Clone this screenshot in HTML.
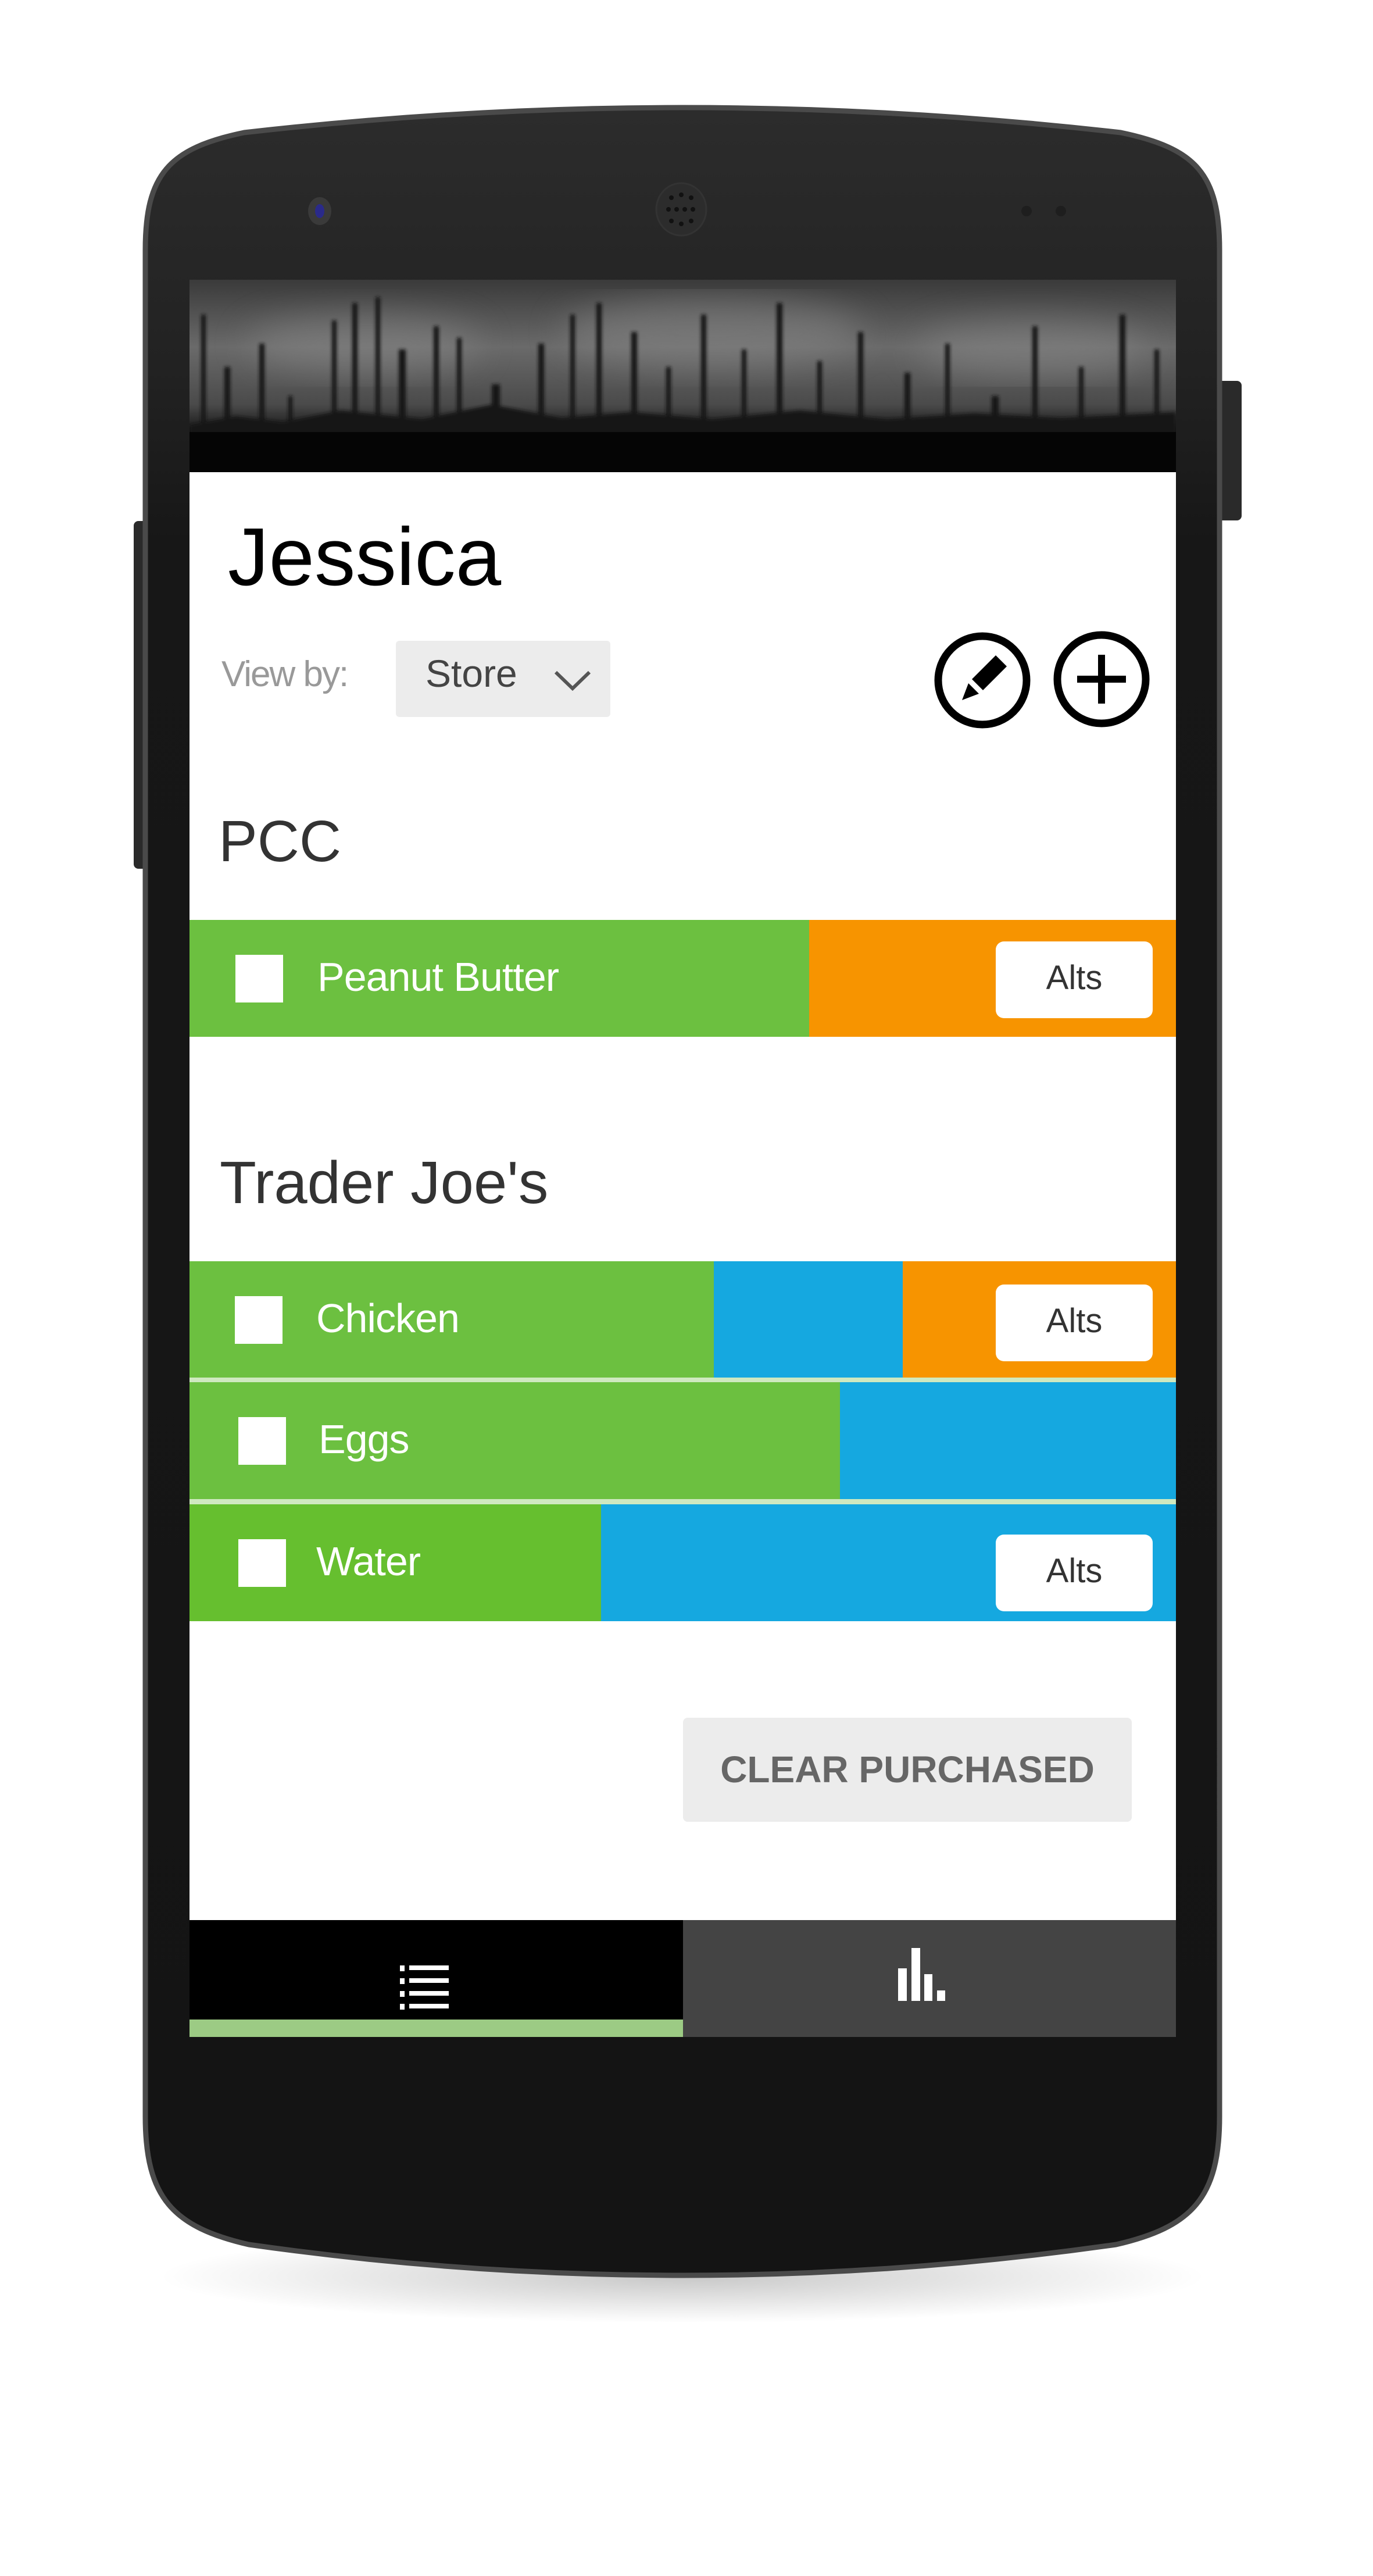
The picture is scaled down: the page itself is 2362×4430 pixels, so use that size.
<!DOCTYPE html>
<html><head><meta charset="utf-8"><style>
html,body{margin:0;padding:0;background:#fff;}
body{width:2362px;height:4430px;position:relative;overflow:hidden;font-family:"Liberation Sans",Arial,sans-serif;}
.a{position:absolute;}
.row{position:absolute;left:326px;width:1697px;height:201px;overflow:hidden;}
.row div{position:absolute;top:0;height:100%;}
.cb{position:absolute;width:82px;height:82px;background:#fff;}
.lbl{position:absolute;color:#fff;font-size:70px;letter-spacing:-1px;}
.alts{position:absolute;left:1387px;width:270px;height:132px;background:#fff;border-radius:14px;color:#333;font-size:58px;text-align:center;line-height:126px;}
</style></head><body>
<svg class="a" style="left:0;top:0" width="2362" height="4430">
<defs>
<linearGradient id="bg" x1="0" y1="0" x2="0" y2="1">
<stop offset="0" stop-color="#2c2c2c"/><stop offset="0.12" stop-color="#222"/><stop offset="0.2" stop-color="#171717"/><stop offset="1" stop-color="#141414"/>
</linearGradient>
<radialGradient id="sh" cx="0.5" cy="0.5" r="0.5"><stop offset="0" stop-color="#000" stop-opacity="0.22"/><stop offset="1" stop-color="#000" stop-opacity="0"/></radialGradient>
</defs>
<ellipse cx="1174" cy="3915" rx="900" ry="80" fill="url(#sh)"/>
<rect x="2090" y="655" width="46" height="240" rx="8" fill="#2a2a2a"/>
<rect x="230" y="896" width="40" height="598" rx="8" fill="#2a2a2a"/>
<path d="M250,430 C250,300 290,255 420,228 Q1174,142 1928,228 C2058,255 2098,300 2098,430 L2098,3640 C2098,3780 2050,3830 1920,3860 Q1174,3966 428,3860 C298,3830 250,3780 250,3640 Z" fill="url(#bg)" stroke="#4a4a4a" stroke-width="9"/>
<ellipse cx="550" cy="363" rx="20" ry="24" fill="#3a3a3a"/><ellipse cx="550" cy="363" rx="8" ry="12" fill="#2a2a8a"/>
<ellipse cx="1172" cy="360" rx="43" ry="45" fill="#2c2c2c" stroke="#333" stroke-width="3"/>
<g fill="#111">
<circle cx="1155" cy="340" r="4"/><circle cx="1172" cy="335" r="4"/><circle cx="1189" cy="340" r="4"/>
<circle cx="1150" cy="360" r="4"/><circle cx="1164" cy="360" r="4"/><circle cx="1178" cy="360" r="4"/><circle cx="1192" cy="360" r="4"/>
<circle cx="1155" cy="380" r="4"/><circle cx="1172" cy="385" r="4"/><circle cx="1189" cy="380" r="4"/></g>
<circle cx="1766" cy="363" r="9" fill="#1e1e1e"/><circle cx="1825" cy="363" r="9" fill="#1e1e1e"/>
</svg>
<div class="a" style="left:326px;top:481px;width:1697px;height:3022px;background:#fff;"></div>
<svg class="a" style="left:326px;top:481px" width="1697" height="331">
<defs><linearGradient id="sky" x1="0" y1="0" x2="0" y2="1"><stop offset="0" stop-color="#3a3a3a"/><stop offset="0.35" stop-color="#6a6a6a"/><stop offset="0.65" stop-color="#4a4a4a"/><stop offset="0.8" stop-color="#111"/><stop offset="1" stop-color="#000"/></linearGradient>
<filter id="bl"><feGaussianBlur stdDeviation="3"/></filter><filter id="bl2"><feGaussianBlur stdDeviation="30"/></filter></defs>
<rect width="1697" height="331" fill="url(#sky)"/>
<g fill="#8a8a8a" opacity="0.5" filter="url(#bl2)"><ellipse cx="300" cy="110" rx="200" ry="50"/><ellipse cx="900" cy="90" rx="260" ry="60"/><ellipse cx="1450" cy="120" rx="200" ry="50"/></g>
<g fill="#151515" filter="url(#bl)">
<rect x="20" y="60" width="8" height="220"/><rect x="60" y="150" width="10" height="140"/><rect x="120" y="110" width="9" height="180"/><rect x="170" y="200" width="7" height="90"/><rect x="245" y="70" width="8" height="220"/><rect x="280" y="40" width="9" height="250"/><rect x="320" y="30" width="8" height="260"/><rect x="360" y="120" width="12" height="170"/><rect x="420" y="80" width="9" height="210"/><rect x="460" y="100" width="8" height="190"/><rect x="520" y="180" width="14" height="110"/><rect x="600" y="110" width="10" height="180"/><rect x="655" y="60" width="8" height="230"/><rect x="700" y="40" width="9" height="250"/><rect x="760" y="90" width="10" height="200"/><rect x="820" y="150" width="8" height="140"/><rect x="880" y="60" width="9" height="230"/><rect x="950" y="120" width="8" height="170"/><rect x="1010" y="40" width="10" height="250"/><rect x="1080" y="140" width="8" height="150"/><rect x="1150" y="90" width="9" height="200"/><rect x="1230" y="160" width="10" height="130"/><rect x="1300" y="110" width="8" height="180"/><rect x="1380" y="200" width="12" height="90"/><rect x="1450" y="80" width="9" height="210"/><rect x="1530" y="150" width="8" height="140"/><rect x="1600" y="60" width="10" height="230"/><rect x="1660" y="120" width="8" height="170"/>
<path d="M0,250 L80,235 L160,245 L260,225 L400,240 L520,215 L640,238 L760,228 L900,240 L1050,225 L1200,240 L1350,230 L1500,238 L1697,228 L1697,331 L0,331 Z"/>
</g>
<rect y="262" width="1697" height="69" fill="#050505"/>
</svg>
<div class="a" style="left:392px;top:872px;font-size:141px;line-height:170px;color:#000;">Jessica</div>
<div class="a" style="left:381px;top:1125px;font-size:62px;line-height:70px;color:#999;letter-spacing:-2px;">View by:</div>
<div class="a" style="left:681px;top:1102px;width:369px;height:131px;background:#ececec;border-radius:6px;"></div>
<div class="a" style="left:732px;top:1120px;font-size:66px;line-height:76px;color:#444;">Store</div>
<svg class="a" style="left:950px;top:1150px" width="70" height="40"><path d="M6,6 L35,34 L64,6" fill="none" stroke="#555" stroke-width="6"/></svg>
<svg class="a" style="left:1600px;top:1080px" width="400" height="180">
<circle cx="90" cy="90" r="76" fill="none" stroke="#000" stroke-width="13"/>
<path d="M72,88 L113,47 L132,66 L91,107 Z" fill="#000"/><path d="M66,95 L84,113 L55,124 Z" fill="#000"/>
<circle cx="295" cy="88" r="76" fill="none" stroke="#000" stroke-width="13"/>
<path d="M295,46 V130 M253,88 H337" stroke="#000" stroke-width="12"/>
</svg>
<div class="a" style="left:376px;top:1392px;font-size:100px;line-height:110px;color:#333;">PCC</div>
<div class="row" style="top:1582px;"><div style="left:0;width:1066px;background:#6cc040"></div><div style="left:1066px;width:631px;background:#f79400"></div>
<span class="cb" style="left:79px;top:60px"></span><span class="lbl" style="left:220px;top:58px">Peanut Butter</span><span class="alts" style="top:37px">Alts</span></div>
<div class="a" style="left:378px;top:1978px;font-size:103px;line-height:112px;color:#333;">Trader Joe's</div>
<div class="row" style="top:2169px;"><div style="left:0;width:902px;background:#6cc040"></div><div style="left:902px;width:325px;background:#15a8e0"></div><div style="left:1227px;width:470px;background:#f79400"></div>
<span class="cb" style="left:78px;top:60px"></span><span class="lbl" style="left:218px;top:58px">Chicken</span><span class="alts" style="top:40px">Alts</span></div>
<div class="a" style="left:326px;top:2369px;width:1697px;height:8px;background:#cfe9c0"></div>
<div class="row" style="top:2377px;"><div style="left:0;width:1119px;background:#6cc040"></div><div style="left:1119px;width:578px;background:#15a8e0"></div>
<span class="cb" style="left:84px;top:60px"></span><span class="lbl" style="left:222px;top:58px">Eggs</span></div>
<div class="a" style="left:326px;top:2578px;width:1697px;height:9px;background:#cfe9c0"></div>
<div class="row" style="top:2587px;"><div style="left:0;width:708px;background:#66bf2f"></div><div style="left:708px;width:989px;background:#15a8e0"></div>
<span class="cb" style="left:84px;top:60px"></span><span class="lbl" style="left:218px;top:58px">Water</span><span class="alts" style="top:52px">Alts</span></div>
<div class="a" style="left:1175px;top:2954px;width:772px;height:179px;background:#ececec;border-radius:8px;color:#666;font-weight:bold;font-size:64px;line-height:179px;text-align:center;">CLEAR PURCHASED</div>
<div class="a" style="left:326px;top:3302px;width:849px;height:171px;background:#000;"></div>
<div class="a" style="left:326px;top:3473px;width:849px;height:30px;background:#9ccb84;"></div>
<div class="a" style="left:1175px;top:3302px;width:848px;height:201px;background:#444;"></div>
<svg class="a" style="left:680px;top:3368px" width="100" height="100" fill="#fff">
<rect x="8" y="12" width="8" height="10"/><rect x="24" y="12" width="68" height="8"/>
<rect x="8" y="34" width="8" height="10"/><rect x="24" y="34" width="68" height="8"/>
<rect x="8" y="56" width="8" height="10"/><rect x="24" y="56" width="68" height="8"/>
<rect x="8" y="78" width="8" height="10"/><rect x="24" y="78" width="68" height="8"/>
</svg>
<svg class="a" style="left:1540px;top:3345px" width="100" height="100" fill="#fff">
<rect x="5" y="40" width="15" height="56"/><rect x="28" y="5" width="15" height="91"/><rect x="50" y="50" width="14" height="46"/><rect x="72" y="78" width="14" height="18"/>
</svg>
</body></html>
